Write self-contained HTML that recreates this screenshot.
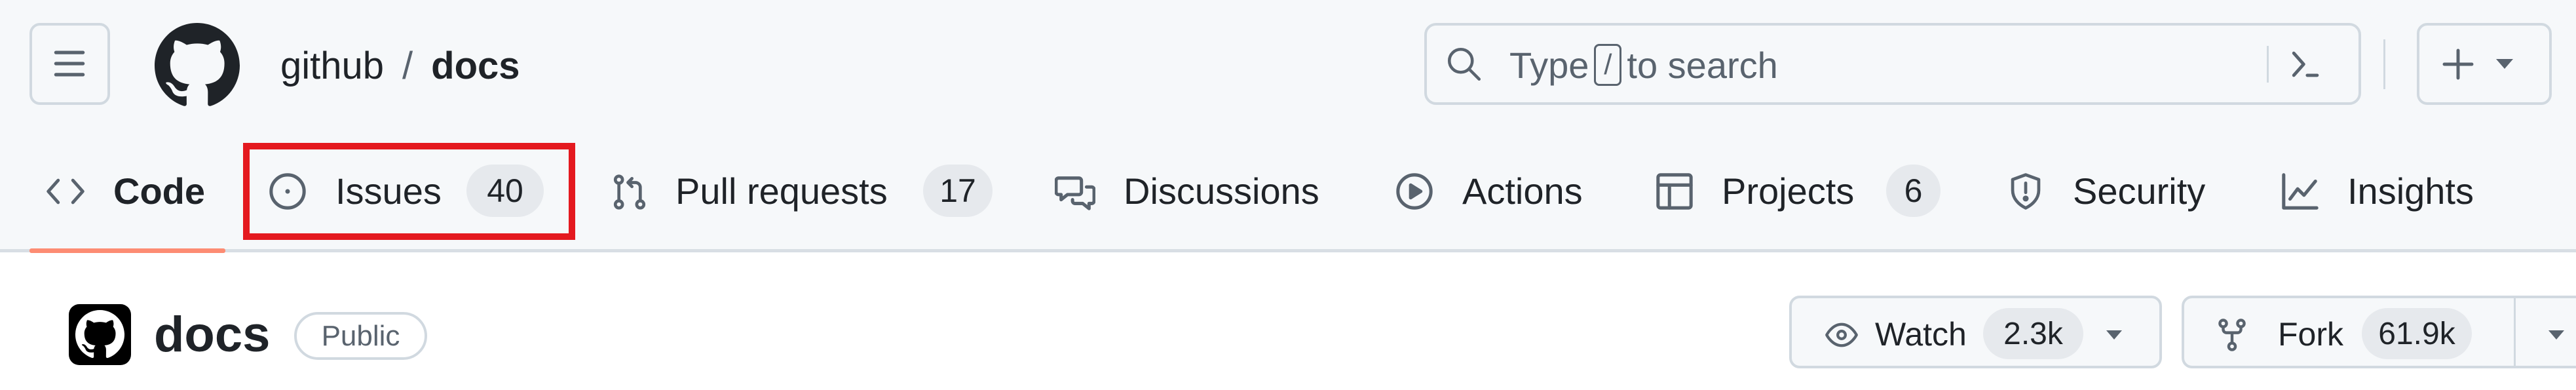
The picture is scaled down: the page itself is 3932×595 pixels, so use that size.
<!DOCTYPE html>
<html><head><meta charset="utf-8"><style>
*{margin:0;padding:0;box-sizing:border-box}
body{width:3932px;height:595px;overflow:hidden;background:#fff;font-family:"Liberation Sans",sans-serif;color:#1f2328;position:relative}
.hdr{position:absolute;left:0;top:0;width:3932px;height:385px;background:#f6f8fa;border-bottom:5px solid #d8dee4}
.a{position:absolute;display:flex;align-items:center}
.btn{position:absolute;border:4px solid #d1d9e0;border-radius:16px;background:#f6f8fa}
.t{font-size:56px;white-space:nowrap}
.badge{position:absolute;height:80px;border-radius:40px;background:#e6e9ed;font-size:50px;display:flex;align-items:center;justify-content:center;font-weight:500}
svg.i{position:absolute;fill:none;stroke:#59636e;stroke-width:1.3;stroke-linecap:round;stroke-linejoin:round}
</style></head><body>
<div class="hdr"></div>

<div class="btn" style="left:45px;top:35px;width:123px;height:125px"></div>
<svg class="i" style="left:76px;top:67px" width="60" height="60" viewBox="0 0 16 16"><path d="M2.5 3.5h11M2.5 8h11M2.5 12.5h11" stroke-width="1.4"/></svg>

<svg style="position:absolute;left:236px;top:35px" width="130" height="130" viewBox="0 0 16 16"><path fill="#1f2328" d="M8 0C3.58 0 0 3.58 0 8c0 3.54 2.29 6.53 5.47 7.59.4.07.55-.17.55-.38 0-.19-.01-.82-.01-1.490-2.01.37-2.53-.49-2.69-.94-.09-.23-.48-.94-.82-1.13-.28-.15-.68-.52-.01-.53.63-.01 1.08.58 1.23.82.72 1.21 1.87.87 2.33.66.07-.52.28-.87.51-1.07-1.78-.2-3.64-.89-3.64-3.95 0-.87.31-1.59.82-2.15-.08-.2-.36-1.02.08-2.12 0 0 .67-.21 2.2.82.64-.18 1.32-.27 2-.27.68 0 1.36.09 2 .27 1.53-1.04 2.2-.82 2.2-.82.44 1.1.16 1.92.08 2.12.51.56.82 1.27.82 2.15 0 3.07-1.87 3.75-3.65 3.95.29.25.54.73.54 1.48 0 1.07-.01 1.93-.01 2.2 0 .21.15.46.55.38A8.013 8.013 0 0016 8c0-4.42-3.58-8-8-8z"/></svg>
<div class="a t" style="left:428px;top:60px;height:80px;font-size:58px">github<span style="margin:0 28px;color:#59636e">/</span><b>docs</b></div>

<div class="btn" style="left:2174px;top:35px;width:1430px;height:125px;border-radius:18px"></div>
<svg class="i" style="left:2207px;top:70px" width="56" height="56" viewBox="0 0 16 16"><circle cx="6.5" cy="6.5" r="5"/><path d="M10.2 10.2l4.3 4.3"/></svg>
<div class="a t" style="left:2304px;top:59px;height:80px;color:#59636e">Type<span style="display:inline-block;border:3px solid #59636e;border-radius:8px;width:42px;height:64px;text-align:center;line-height:58px;font-size:44px;margin:0 8px">/</span>to search</div>
<div style="position:absolute;left:3460px;top:70px;width:3px;height:56px;background:#d1d9e0"></div>
<svg class="i" style="left:3490px;top:68px" width="60" height="60" viewBox="0 0 16 16"><path d="M3 3.5l4 4.5-4 4.5M8.5 12.5h4"/></svg>
<div style="position:absolute;left:3638px;top:60px;width:3px;height:76px;background:#d1d9e0"></div>
<div class="btn" style="left:3689px;top:35px;width:206px;height:125px"></div>
<svg class="i" style="left:3724px;top:70px" width="56" height="56" viewBox="0 0 16 16"><path d="M8 2v12M2 8h12" stroke-width="1.4"/></svg>
<svg style="position:absolute;left:3810px;top:90px" width="26" height="16" viewBox="0 0 26 16"><path d="M0 0h26L13 15z" fill="#59636e"/></svg>

<svg class="i" style="left:70px;top:262px" width="60" height="60" viewBox="0 0 16 16"><path d="M5 3.5L1 8l4 4.5M11 3.5l4 4.5-4 4.5"/></svg>
<div class="a t" style="left:173px;top:251px;height:80px"><b>Code</b></div>
<div style="position:absolute;left:45px;top:379px;width:299px;height:7px;background:#fd8c73;border-radius:3px"></div>

<div style="position:absolute;left:371px;top:218px;width:507px;height:148px;border:10px solid #e4191f"></div>
<svg class="i" style="left:408px;top:261px" width="62" height="62" viewBox="0 0 16 16"><circle cx="8" cy="8" r="6.5"/><circle cx="8" cy="8" r="0.9" fill="#59636e" stroke="none"/></svg>
<div class="a t" style="left:512px;top:251px;height:80px">Issues</div>
<div class="badge" style="left:712px;top:251px;width:118px">40</div>

<svg class="i" style="left:932px;top:262px" width="58" height="62" viewBox="0 0 16 16"><circle cx="3.5" cy="2.8" r="1.5"/><circle cx="3.5" cy="13.2" r="1.5"/><circle cx="12.5" cy="13.2" r="1.5"/><path d="M3.5 4.3v7.4M12.5 11.7V6a2 2 0 0 0-2-2H7.5M9 2.3L7.3 4 9 5.7"/></svg>
<div class="a t" style="left:1031px;top:251px;height:80px">Pull requests</div>
<div class="badge" style="left:1409px;top:251px;width:106px">17</div>

<svg class="i" style="left:1610px;top:262px" width="62" height="62" viewBox="0 0 16 16"><path d="M1.5 2.5h8a1 1 0 0 1 1 1V8a1 1 0 0 1-1 1H5L2.5 11V9h-1a1 1 0 0 1-1-1V3.5a1 1 0 0 1 1-1zM12.5 6h2a1 1 0 0 1 1 1v4.5a1 1 0 0 1-1 1h-1V14.5L11 12.5H8a1 1 0 0 1-1-1V11"/></svg>
<div class="a t" style="left:1715px;top:251px;height:80px">Discussions</div>

<svg class="i" style="left:2128px;top:261px" width="62" height="62" viewBox="0 0 16 16"><circle cx="8" cy="8" r="6.5"/><path d="M6.5 5.5v5l4-2.5z" fill="#59636e"/></svg>
<div class="a t" style="left:2232px;top:251px;height:80px">Actions</div>

<svg class="i" style="left:2525px;top:261px" width="62" height="62" viewBox="0 0 16 16"><rect x="1.5" y="1.5" width="13" height="13" rx="1"/><path d="M1.5 5.5h13M6 5.5v9"/></svg>
<div class="a t" style="left:2628px;top:251px;height:80px">Projects</div>
<div class="badge" style="left:2879px;top:251px;width:83px">6</div>

<svg class="i" style="left:3063px;top:261px" width="58" height="62" viewBox="0 0 16 16"><path d="M8 1L2.5 3v4.5c0 3.5 2.5 6 5.5 7.5 3-1.5 5.5-4 5.5-7.5V3z"/><path d="M8 4.5v4"/><circle cx="8" cy="11" r="0.6" fill="#59636e"/></svg>
<div class="a t" style="left:3164px;top:251px;height:80px">Security</div>

<svg class="i" style="left:3480px;top:261px" width="62" height="62" viewBox="0 0 16 16"><path d="M1.5 1.5v13h13M4 11l3-4 2.5 2.5L14 4"/></svg>
<div class="a t" style="left:3583px;top:251px;height:80px">Insights</div>

<div style="position:absolute;left:105px;top:464px;width:95px;height:93px;background:#000;border-radius:16px"></div>
<svg style="position:absolute;left:115px;top:473px" width="75" height="75" viewBox="0 0 16 16"><path fill="#fff" d="M8 0C3.58 0 0 3.58 0 8c0 3.54 2.29 6.53 5.47 7.59.4.07.55-.17.55-.38 0-.19-.01-.82-.01-1.49-2.01.37-2.53-.49-2.69-.94-.09-.23-.48-.94-.82-1.13-.28-.15-.68-.52-.01-.53.63-.01 1.08.58 1.23.82.72 1.21 1.87.87 2.33.66.07-.52.28-.87.51-1.07-1.78-.2-3.64-.89-3.64-3.95 0-.87.31-1.59.82-2.15-.08-.2-.36-1.02.08-2.12 0 0 .67-.21 2.2.82.64-.18 1.32-.27 2-.27.68 0 1.36.09 2 .27 1.53-1.04 2.2-.82 2.2-.82.44 1.1.16 1.92.08 2.12.51.56.82 1.27.82 2.15 0 3.070-1.87 3.75-3.65 3.95.29.25.54.73.54 1.48 0 1.07-.01 1.93-.01 2.2 0 .21.15.46.55.38A8.013 8.013 0 0016 8c0-4.42-3.58-8-8-8z"/></svg>
<div class="a" style="left:235px;top:465px;height:90px;font-size:76px;font-weight:bold">docs</div>
<div class="a" style="left:449px;top:476px;width:203px;height:73px;border:4px solid #d1d9e0;border-radius:37px;justify-content:center;font-size:44px;color:#59636e">Public</div>

<div class="btn" style="left:2731px;top:451px;width:569px;height:111px;background:#f6f8fa"></div>
<svg class="i" style="left:2785px;top:485px" width="52" height="52" viewBox="0 0 16 16"><path d="M1 8s2.5-5 7-5 7 5 7 5-2.5 5-7 5-7-5-7-5z"/><circle cx="8" cy="8" r="1.8"/></svg>
<div class="a" style="left:2862px;top:470px;height:80px;font-size:50px;font-weight:500">Watch</div>
<div class="badge" style="left:3027px;top:470px;width:153px;height:78px;font-size:48px">2.3k</div>
<svg style="position:absolute;left:3215px;top:504px" width="24" height="14" viewBox="0 0 24 14"><path d="M0 0h24L12 14z" fill="#59636e"/></svg>

<div class="btn" style="left:3330px;top:451px;width:640px;height:111px;background:#f6f8fa"></div>
<svg class="i" style="left:3380px;top:482px" width="54" height="58" viewBox="0 0 16 16"><circle cx="4" cy="2.8" r="1.5"/><circle cx="12" cy="2.8" r="1.5"/><circle cx="8" cy="13.2" r="1.5"/><path d="M4 4.3v1.2a1.5 1.5 0 0 0 1.5 1.5h5A1.5 1.5 0 0 0 12 5.5V4.3M8 7v4.7"/></svg>
<div class="a" style="left:3477px;top:470px;height:80px;font-size:50px;font-weight:500">Fork</div>
<div class="badge" style="left:3605px;top:470px;width:168px;height:78px;font-size:48px">61.9k</div>
<div style="position:absolute;left:3837px;top:455px;width:3px;height:103px;background:#d1d9e0"></div>
<svg style="position:absolute;left:3890px;top:504px" width="24" height="14" viewBox="0 0 24 14"><path d="M0 0h24L12 14z" fill="#59636e"/></svg>
</body></html>
